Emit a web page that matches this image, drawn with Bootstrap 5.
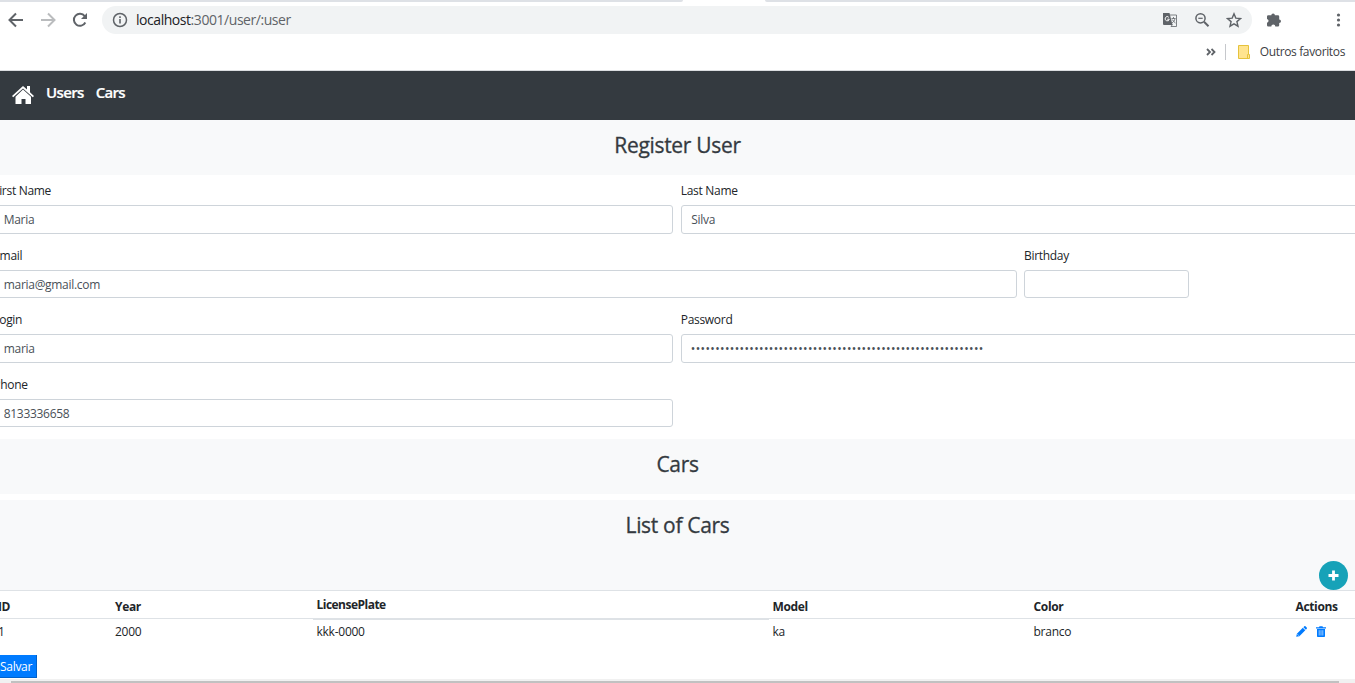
<!DOCTYPE html>
<html lang="en">
<head>
<meta charset="utf-8">
<meta name="viewport" content="width=device-width, initial-scale=1">
<title>Register User</title>
<link href="https://cdn.jsdelivr.net/npm/bootstrap@5.3.0/dist/css/bootstrap.min.css" rel="stylesheet">
<style>
  html, body { height: 683px; overflow: hidden; }
  body { font-family: "Open Sans", "Noto Sans", sans-serif; font-size: 12px; line-height: 18px; color: #212529; letter-spacing: -.3px; }
  svg { display: block; flex: none; }
  .browser { height: 71px; border-bottom: 1px solid #dadce0; }
  .tab-edge { height: 2px; }
  .tab-edge i { height: 2px; background: #dee1e6; }
  .tab-left { width: 683px; border-bottom-right-radius: 3px; }
  .tab-right { width: 590px; border-bottom-left-radius: 3px; }
  .toolbar-row { height: 36px; padding: 4px 9px 4px 8px; color: #5f6368; }
  .address { height: 28px; width: 1150px; margin-left: 14px; border-radius: 14px; background: #f1f3f4; padding: 0 10px; font-size: 14px; letter-spacing: -.45px; }
  .address b { font-weight: 400; color: #202124; }
  .bookmarks { height: 28px; padding-right: 10px; color: #3c4043; font-size: 12px; letter-spacing: -.36px; }
  .bookmarks .rule { width: 1px; height: 16px; background: #c6c8cc; margin: 0 12px 0 9px; }
  .topnav { height: 49px; background: #343a40; padding: 0 12px; font-size: 15px; font-weight: 600; letter-spacing: -.65px; }
  .topnav a { color: #fff; text-decoration: none; line-height: 43px; -webkit-text-stroke: .2px; }
  .band { height: 55px; background: #f8f9fa; color: #343a40; text-align: center; padding-top: 12px; }
  .band h4 { font-size: 21px; line-height: 27px; font-weight: 500; letter-spacing: -.32px; margin: 0; -webkit-text-stroke: .3px; }
  .list-band { height: 90px; margin-top: 6px; }
  .user-form { height: 264px; padding-top: 5px; }
  .user-form .row { --bs-gutter-x: 7.5px; margin: 0 -9.5px 0 -10.500px; height: 64.6px; }
  .user-form label { display: block; height: 25.3px; line-height: 22px; }
  .user-form .form-control { height: 28.4px; min-height: 0; font-size: 12px; line-height: 18px; padding: 4px 9px 4px 9.500px; border-color: #ced4da; border-radius: 3px; color: #495057; letter-spacing: inherit; }
  .user-form .form-control[type=password] { padding-left: 9px; letter-spacing: .37px; }
  .col-birthday { flex: none; width: 172.5px; margin-left: -.5px; }
  .add-btn { width: 29px; height: 29px; background: #17a2b8; position: absolute; right: 7px; bottom: 0; }
  .cars { width: 1367px; margin: 0 0 0 -6px; table-layout: fixed; line-height: 18px; border-top: 1px solid #dee2e6; }
  .cars th, .cars td { padding: 0 4px; text-align: left; }
  .cars th { height: 28px; font-weight: 700; padding-top: 4px; border-bottom: 1px solid #dee2e6; letter-spacing: -.35px; }
  .cars th.plate { border-bottom-width: 2px; padding-top: 2px; letter-spacing: -.52px; }
  .cars td { height: 26px; letter-spacing: -.25px; }
  .save { height: 23px; width: 43px; margin: 10px 0 0 -6px; background: #007bff; color: #fff; border: solid #0062cc; border-width: 0 1px 1px 0; padding: 1px 4px 0 6px; line-height: 22px; font-size: 12px; letter-spacing: -.3px; text-align: left; border-radius: 0; }
  .scroller { height: 4px; background: #f1f1f1; margin-top: 1px; padding: 2px 16px 0 11px; }
  .scroller i { display: block; height: 2px; background: #c1c1c1; }
</style>
</head>
<body>
<header class="browser">
  <div class="tab-edge d-flex justify-content-between"><i class="tab-left"></i><i class="tab-right"></i></div>
  <div class="toolbar-row d-flex align-items-center">
    <svg width="16" height="16" viewBox="0 0 16 16" fill="none" stroke="#5f6368" stroke-width="2"><path d="M15 8H2M8 1.5L1.5 8 8 14.5"/></svg>
    <svg class="ms-3" width="16" height="16" viewBox="0 0 16 16" fill="none" stroke="#babcbe" stroke-width="2"><path d="M1 8h13M8 1.5L14.500 8 8 14.500"/></svg>
    <svg class="ms-3" width="16" height="16" viewBox="0 0 16 16"><path d="M13.300 10.500A6 6 0 1 1 12.700 4.200" fill="none" stroke="#5f6368" stroke-width="2"/><path d="M15 1v6H9z" fill="#5f6368"/></svg>
    <div class="address d-flex align-items-center">
      <svg width="16" height="16" viewBox="0 0 16 16"><circle cx="8" cy="8" r="6.500" fill="none" stroke="#5f6368" stroke-width="1.500"/><path d="M7.200 7h1.600v4.500H7.200zM7.200 4.300h1.600v1.600H7.200z" fill="#5f6368"/></svg>
      <span class="ms-2 me-auto"><b>localhost</b>:3001/user/:user</span>
      <svg width="16" height="16" viewBox="0 0 16 16"><path d="M1 1h6.500L10.500 13H2a1 1 0 0 1-1-1z" fill="#5f6368"/><path d="M8 3h6.500v11.500H9l1.500-2M9.500 6.500h4M11.500 5v1.500M13 6.500c-.3 2-1.500 3.500-3 4.500M10.200 7.500c.8 1.500 2 2.500 3.300 3.500" fill="none" stroke="#5f6368" stroke-width=".8"/><path d="M6.800 5.300A2.100 2.100 0 1 0 7.300 7.200H5.300" fill="none" stroke="#fff" stroke-width="1"/></svg>
      <svg class="ms-3" width="16" height="16" viewBox="0 0 16 16" fill="none" stroke="#5f6368"><circle cx="6.500" cy="6.300" r="4.600" stroke-width="1.500"/><path d="M10 9.800l4.500 4.500" stroke-width="2"/><path d="M4.300 6.300h4.400" stroke-width="1.200"/></svg>
      <svg class="ms-3" width="16" height="16" viewBox="0 0 16 16" fill="none" stroke="#5f6368" stroke-width="1.400"><path d="M8 1.800l1.800 4.300 4.700.4-3.600 3.100 1.100 4.600L8 11.800l-4 2.400 1.100-4.600-3.600-3.100 4.700-.4z"/></svg>
    </div>
    <svg width="16" height="16" viewBox="0 0 16 16" style="margin-left:14px"><path d="M2.300 3.300h3a1.800 1.800 0 1 1 3.600 0h3a1.300 1.300 0 0 1 1.300 1.300v2.800a1.800 1.800 0 1 1 0 3.600v2.200a1.300 1.300 0 0 1-1.300 1.300H9.300a2 2 0 0 0-4 0h-3A1.300 1.300 0 0 1 1 13.200v-2.400a2 2 0 0 0 0-3.900V4.600a1.300 1.300 0 0 1 1.300-1.300z" fill="#5f6368"/></svg>
    <svg class="ms-auto" width="16" height="16" viewBox="0 0 16 16" fill="#5f6368"><circle cx="8.500" cy="3" r="1.600"/><circle cx="8.500" cy="8" r="1.600"/><circle cx="8.500" cy="13" r="1.600"/></svg>
  </div>
  <div class="bookmarks d-flex align-items-center justify-content-end">
    <svg width="10" height="8" viewBox="0 0 10 8" fill="none" stroke="#5f6368" stroke-width="1.800"><path d="M1 1l3 3-3 3M5.500 1l3 3-3 3"/></svg>
    <span class="rule"></span>
    <svg width="12" height="14" viewBox="0 0 12 14"><path d="M.5.500h10v9h1v4H.5z" fill="#ffe48f" stroke="#e5c23c"/><path d="M9.500 13.500v-4h1" fill="none" stroke="#e5c23c"/></svg>
    <span style="margin-left:10px">Outros favoritos</span>
  </div>
</header>
<nav class="topnav d-flex">
  <svg width="22" height="20" viewBox="0 0 22 20" fill="#fff" style="margin-top:14px"><path d="M11 1l4 3.500V1h3v6.200L22 11l-1.200 1.300L11 3.600l-9.800 8.700L0 11z"/><path d="M11 4.600l8 7.200V19h-5.500v-5h-4v5H3.500v-7.200z"/></svg>
  <a href="#" style="margin-left:12px">Users</a>
  <a href="#" style="margin-left:12px">Cars</a>
</nav>
<main>
  <div class="band"><h4>Register User</h4></div>
  <form class="user-form">
    <div class="row">
      <div class="col-6"><label>First Name</label><input class="form-control" value="Maria"></div>
      <div class="col-6"><label>Last Name</label><input class="form-control" value="Silva"></div>
    </div>
    <div class="row">
      <div class="col-9"><label>Email</label><input class="form-control" value="maria@gmail.com"></div>
      <div class="col-birthday"><label>Birthday</label><input class="form-control"></div>
    </div>
    <div class="row">
      <div class="col-6"><label>Login</label><input class="form-control" value="maria"></div>
      <div class="col-6"><label>Password</label><input type="password" class="form-control" value="abcdefghijabcdefghijabcdefghijabcdefghijabcdefghijabcdefghij"></div>
    </div>
    <div class="row">
      <div class="col-6"><label>Phone</label><input class="form-control" value="8133336658"></div>
    </div>
  </form>
  <div class="band"><h4>Cars</h4></div>
  <div class="band list-band position-relative">
    <h4>List of Cars</h4>
    <button class="add-btn btn border-0 rounded-circle p-0 d-flex align-items-center justify-content-center"><svg width="11" height="11" viewBox="0 0 11 11"><path d="M5.500.5v10M.5 5.500h10" stroke="#fff" stroke-width="2.800"/></svg></button>
  </div>
  <table class="cars">
    <colgroup><col style="width:117px"><col style="width:201.500px"><col style="width:456px"><col style="width:261px"><col style="width:262px"><col></colgroup>
    <thead><tr><th>ID</th><th>Year</th><th class="plate">LicensePlate</th><th>Model</th><th>Color</th><th>Actions</th></tr></thead>
    <tbody><tr><td>1</td><td>2000</td><td>kkk-0000</td><td>ka</td><td>branco</td><td>
      <div class="d-flex" style="gap:9px">
        <svg width="11" height="11" viewBox="0 0 11 11" fill="#007bff"><path d="M.2 10.800L.9 7.700 6.800 1.800l2.500 2.500-5.900 5.900zM7.400 1.200l.9-.9a.9.9 0 0 1 1.200 0l1.200 1.200a.9.900 0 0 1 0 1.300l-.8.900z"/><path d="M1.500 8.300l1.300 1.300" stroke="#fff" stroke-width=".7"/></svg>
        <svg width="10" height="11" viewBox="0 0 10 11"><path d="M0 1.200h3L3.500.3h3l.5.900h3v1.300H0zM1 3h8v7.200a.8.800 0 0 1-.8.800H1.800a.8.800 0 0 1-.8-.8z" fill="#007bff"/><path d="M3.200 4.200v5.300M5 4.200v5.300M6.800 4.200v5.300" stroke="#fff" stroke-width=".6"/></svg>
      </div></td></tr></tbody>
  </table>
  <button class="save btn">Salvar</button>
  <div class="scroller"><i></i></div>
</main>
<script src="https://cdn.jsdelivr.net/npm/bootstrap@5.3.0/dist/js/bootstrap.bundle.min.js"></script>
</body>
</html>
